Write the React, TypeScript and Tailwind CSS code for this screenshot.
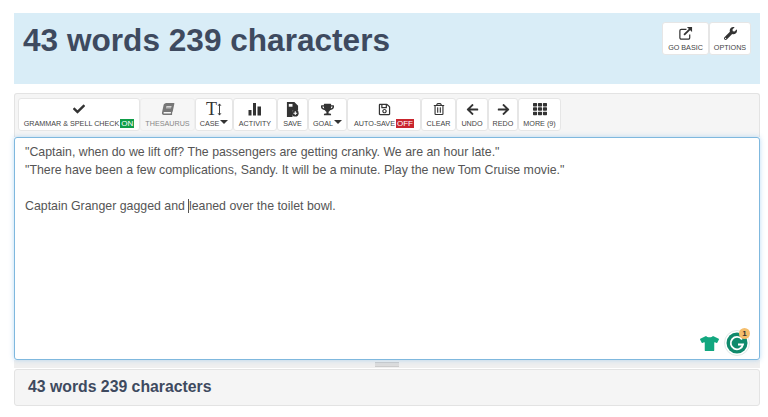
import type { ReactNode } from "react";
import {
	FaArrowLeft,
	FaArrowRight,
	FaBook,
	FaCheck,
	FaRegSave,
	FaRegTrashAlt,
	FaTh,
	FaTrophy,
	FaTshirt,
	FaWrench,
} from "react-icons/fa";

const ExternalIcon = () => (
	<svg viewBox="0 0 16 16" className="h-[15px] w-[15px]" fill="none" stroke="#333">
		<title>External link</title>
		<path strokeWidth="1.3" d="M9 3.5H3.5A1.5 1.5 0 0 0 2 5v7.5A1.5 1.5 0 0 0 3.5 14H11a1.5 1.5 0 0 0 1.5-1.5V9" />
		<path strokeWidth="2" d="M6.5 9.5 13 3" />
		<path fill="#333" stroke="none" d="M9.5 1H15v5.5z" />
	</svg>
);

const StatsIcon = () => (
	<svg viewBox="0 0 14 14" className="h-[14px] w-[14px]" fill="#333">
		<title>Bars</title>
		<rect x="0.5" y="8" width="3" height="5.5" />
		<rect x="5" y="1" width="3" height="12.5" />
		<rect x="9.5" y="4.5" width="3.5" height="9" />
	</svg>
);

const SaveFileIcon = () => (
	<svg viewBox="0 0 14 16" className="h-[15px] w-[13px]">
		<title>Save file</title>
		<path fill="#333" d="M1 0h8l4 4v5H7v7H1z" />
		<rect x="3" y="2" width="4" height="3" fill="#f8f8f8" />
		<circle cx="10" cy="12" r="3.6" fill="#333" />
		<path stroke="#fff" strokeWidth="1.2" d="M10 10v4M8 12h4" />
	</svg>
);

const CaseIcon = () => (
	<div className="flex h-[16px] items-center leading-[16px] text-[#333]">
		<span className="font-['Liberation_Serif',serif] text-[18px]">T</span>
		<svg viewBox="0 0 5 14" className="h-[13px] w-[5px]" fill="none" stroke="#333">
			<title>Change case</title>
			<path d="M2.5 1v12M1 3l1.5-2L4 3M1 11l1.5 2L4 11" />
		</svg>
	</div>
);

const Caret = () => (
	<span className="ml-px inline-block border-x-[4px] border-t-[4px] border-x-transparent border-t-[#333] align-[2px]" />
);

const Badge = ({ on }: { on: boolean }) => (
	<span
		className={
			on
				? "ml-px inline-block bg-[#0f9d48] px-px text-[8px] leading-[9px] text-white"
				: "ml-px inline-block bg-[#c9252d] px-px text-[8px] leading-[9px] text-white"
		}
	>
		{on ? "ON" : "OFF"}
	</span>
);

type Tool = {
	width: string;
	icon: ReactNode;
	label: ReactNode;
	muted?: boolean;
};

const tools: Tool[] = [
	{ width: "w-[122px]", icon: <FaCheck size={12} />, label: <>GRAMMAR &amp; SPELL CHECK<Badge on /></> },
	{ width: "w-[55px]", icon: <FaBook size={12} className="-skew-x-12" />, label: "THESAURUS", muted: true },
	{ width: "w-[38px]", icon: <CaseIcon />, label: <>CASE<Caret /></> },
	{ width: "w-[44px]", icon: <StatsIcon />, label: "ACTIVITY" },
	{ width: "w-[31px]", icon: <SaveFileIcon />, label: "SAVE" },
	{ width: "w-[39px]", icon: <FaTrophy size={13} />, label: <>GOAL<Caret /></> },
	{ width: "w-[74px]", icon: <FaRegSave size={13} />, label: <>AUTO-SAVE<Badge on={false} /></> },
	{ width: "w-[35px]", icon: <FaRegTrashAlt size={12} />, label: "CLEAR" },
	{ width: "w-[32px]", icon: <FaArrowLeft size={13} />, label: "UNDO" },
	{ width: "w-[30px]", icon: <FaArrowRight size={13} />, label: "REDO" },
	{ width: "w-[43px]", icon: <FaTh size={14} />, label: "MORE (9)" },
];

const ToolButton = ({ tool }: { tool: Tool }) => (
	<button
		type="button"
		className={`flex h-[33px] flex-col items-center justify-between whitespace-nowrap rounded-[3px] border pt-[2px] pb-[1px] text-[7.2px] leading-[10px] ${tool.width} ${
			tool.muted ? "border-[#eeeeee] bg-[#f6f6f6] text-[#888]" : "border-[#e6e6e6] bg-white text-[#444]"
		}`}
	>
		<span className={`flex h-[16px] items-center ${tool.muted ? "text-[#777]" : "text-[#333]"}`}>
			{tool.icon}
		</span>
		<span>{tool.label}</span>
	</button>
);

const HeaderButton = ({ icon, label, width }: { icon: ReactNode; label: string; width: string }) => (
	<button
		type="button"
		className={`flex h-[33px] flex-col items-center justify-between rounded-[3px] border border-[#e6e6e6] bg-white pt-[2px] pb-[1px] text-[7.2px] leading-[10px] text-[#444] ${width}`}
	>
		<span className="flex h-[16px] items-center text-[#333]">{icon}</span>
		<span>{label}</span>
	</button>
);

const GrammarlyBadge = () => (
	<div className="relative h-[26px] w-[26px]">
		<svg viewBox="0 0 26 26" className="h-[26px] w-[26px]">
			<title>Grammarly</title>
			<circle cx="13" cy="13" r="12.5" fill="#fff" stroke="#dfe8e6" />
			<circle cx="13" cy="13" r="10.5" fill="#0f8a6c" />
			<path fill="none" stroke="#fff" strokeWidth="1.8" d="M18 9.5A6.2 6.2 0 1 0 19 14.5h-5" />
		</svg>
		<span className="absolute -top-[2px] right-0 flex h-[11px] w-[11px] items-center justify-center rounded-full bg-[#f4bd6b] text-[8px] font-bold leading-none text-[#333]">
			1
		</span>
	</div>
);

const App = () => (
	<div className="h-[417px] w-[768px] overflow-hidden bg-white pt-[13px] pr-[8px] pl-[14px] font-['Liberation_Sans',Arial,sans-serif]">
		<header className="flex h-[71px] justify-between bg-[#d9edf7] pt-[9px] pr-[9px] pl-[9px]">
			<h1 className="text-[31.6px] font-bold leading-[36px] text-[#3e4a5f]">43 words 239 characters</h1>
			<div className="flex">
				<HeaderButton icon={<ExternalIcon />} label="GO BASIC" width="w-[47px]" />
				<HeaderButton icon={<FaWrench size={13} />} label="OPTIONS" width="w-[42px]" />
			</div>
		</header>

		<section className="mt-[9px] flex h-[44px] rounded-t-[3px] border border-b-0 border-[#e3e3e3] bg-[#f5f5f5] pt-[4px] pl-[3px]">
			{tools.map((tool, i) => (
				<ToolButton key={i} tool={tool} />
			))}
		</section>

		<div className="relative h-[223px] rounded-[3px] border border-[#7fb8de] bg-white px-[10px] py-[5px] text-[12.35px] leading-[18px] text-[#555] shadow-[0_0_5px_rgba(102,175,233,0.45)]">
			<p>"Captain, when do we lift off? The passengers are getting cranky. We are an hour late."</p>
			<p>"There have been a few complications, Sandy. It will be a minute. Play the new Tom Cruise movie."</p>
			<p className="mt-[18px]">
				Captain Granger gagged and<span className="ml-[3px] inline-block h-[14px] w-px bg-[#555] align-[-3px]" />leaned over the toilet bowl.
			</p>
			<div className="absolute right-[9px] bottom-[3px] flex items-center gap-[5px]">
				<FaTshirt size={19} color="#12a77f" />
				<GrammarlyBadge />
			</div>
		</div>

		<div className="flex h-[8px] items-center justify-center bg-[#efefef]">
			<div className="h-[5px] w-[24px] border-y border-[#ccc] bg-[#ddd]" />
		</div>

		<footer className="mt-px flex h-[37px] items-center rounded-[3px] border border-[#e3e3e3] bg-[#f5f5f5] pb-[2px] pl-[13px] text-[15.8px] font-bold text-[#3e4a5f]">
			43 words 239 characters
		</footer>
	</div>
);

export default App;
